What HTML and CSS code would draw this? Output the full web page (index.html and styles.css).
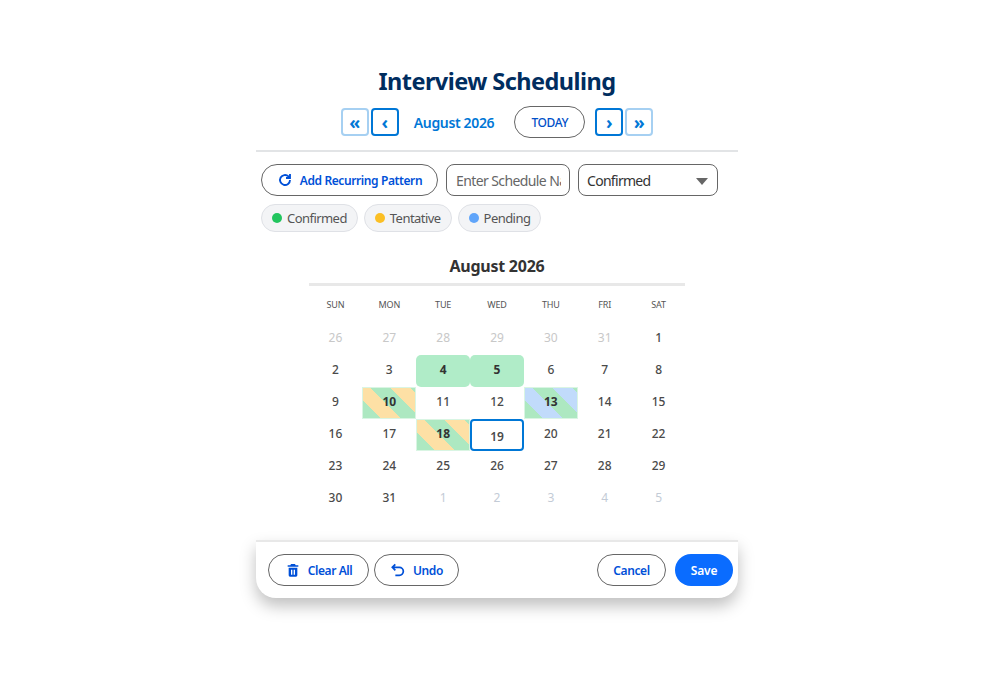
FILE: index.html
```html
<!DOCTYPE html>
<html lang="en">
<head>
<meta charset="utf-8">
<title>Interview Scheduling</title>
<link rel="stylesheet" href="styles.css">
</head>
<body>
<main class="panel">
  <h1 class="title">Interview Scheduling</h1>
  <nav class="nav">
    <button class="sq faint">&laquo;</button>
    <button class="sq">&lsaquo;</button>
    <span class="month">August 2026</span>
    <button class="today">TODAY</button>
    <button class="sq">&rsaquo;</button>
    <button class="sq faint">&raquo;</button>
  </nav>
  <div class="controls">
    <button class="pill add">
      <svg class="ico" viewBox="0 0 24 24" width="16" height="16"><path d="M19.5 12a7.5 7.5 0 1 1-2.3-5.4L19.5 9M19.5 3V9H13.5" fill="none" stroke="currentColor" stroke-width="2.8"/></svg>
      Add Recurring Pattern
    </button>
    <input class="name" placeholder="Enter Schedule Name">
    <div class="select">Confirmed<span class="caret"></span></div>
  </div>
  <div class="legend">
    <span class="chip"><i class="dot green"></i>Confirmed</span>
    <span class="chip"><i class="dot amber"></i>Tentative</span>
    <span class="chip"><i class="dot blue"></i>Pending</span>
  </div>
  <section class="cal">
    <h2 class="cal-title">August 2026</h2>
    <div class="grid">
      <div class="dow">SUN</div><div class="dow">MON</div><div class="dow">TUE</div><div class="dow">WED</div><div class="dow">THU</div><div class="dow">FRI</div><div class="dow">SAT</div>
      <div class="d off">26</div><div class="d off">27</div><div class="d off">28</div><div class="d off">29</div><div class="d off">30</div><div class="d off">31</div><div class="d">1</div>
      <div class="d">2</div><div class="d">3</div><div class="d b solid">4</div><div class="d b solid">5</div><div class="d">6</div><div class="d">7</div><div class="d">8</div>
      <div class="d">9</div><div class="d b st-a">10</div><div class="d">11</div><div class="d">12</div><div class="d b st-b">13</div><div class="d">14</div><div class="d">15</div>
      <div class="d">16</div><div class="d">17</div><div class="d b st-a">18</div><div class="d cur">19</div><div class="d">20</div><div class="d">21</div><div class="d">22</div>
      <div class="d">23</div><div class="d">24</div><div class="d">25</div><div class="d">26</div><div class="d">27</div><div class="d">28</div><div class="d">29</div>
      <div class="d">30</div><div class="d">31</div><div class="d off2">1</div><div class="d off2">2</div><div class="d off2">3</div><div class="d off2">4</div><div class="d off2">5</div>
    </div>
  </section>
  <footer class="foot">
    <button class="pill act">
      <svg class="ico" viewBox="0 0 24 24" width="16" height="16"><path d="M9 3h6l1 2h4v2H4V5h4zM5.5 8.5h13V20a2 2 0 0 1-2 2h-9a2 2 0 0 1-2-2zM9 11.5V19h2v-7.5zm4 0V19h2v-7.5z" fill="currentColor" fill-rule="evenodd"/></svg>
      Clear All
    </button>
    <button class="pill act">
      <svg class="ico" viewBox="0 0 24 24" width="16" height="16"><path d="M8 3.5 3.5 8 8 12.5M4 8h10a6 6 0 0 1 0 12H8" fill="none" stroke="currentColor" stroke-width="2.6"/></svg>
      Undo
    </button>
    <span class="spacer"></span>
    <button class="pill act cancel">Cancel</button>
    <button class="save">Save</button>
  </footer>
</main>
</body>
</html>
```
FILE: styles.css
```css
* { box-sizing: border-box; }
body { margin: 0; padding: 0 0 40px 1px; background: #fff; font-family: "Noto Sans", sans-serif; color: #333; }
button { font-family: inherit; cursor: pointer; background: #fff; }
.panel { width: 482px; margin: 0 auto; padding-top: 64px; }
.title { margin: 0; text-align: center; font-size: 23.5px; letter-spacing: -0.55px; line-height: 34px; font-weight: 700; color: #002d5f; }
.nav { display: flex; justify-content: center; align-items: center; padding: 8px 0 12px; border-bottom: 2px solid #e2e4e6; }
.sq { width: 28px; height: 28px; margin: 0 1px; padding: 0; border: 2px solid #0077d6; border-radius: 4px; color: #0077d6; font-size: 18px; line-height: 20px; font-weight: 700; }
.sq.faint { border-color: #a6d0f2; }
.month { margin: 0 20px 0 14px; font-size: 14px; letter-spacing: -0.35px; font-weight: 600; color: #0077d6; }
.today { width: 71px; height: 32px; margin-right: 9px; border: 1px solid #666; border-radius: 16px; color: #0050c8; font-size: 12px; letter-spacing: -0.4px; font-weight: 500; padding: 0; }
.controls { display: flex; align-items: center; gap: 8px; padding: 12px 5px 0; }
.pill { display: inline-flex; align-items: center; justify-content: center; gap: 7px; border: 1px solid #666; border-radius: 16px; height: 32px; color: #0050d8; font-size: 12px; letter-spacing: -0.4px; font-weight: 600; padding: 0; }
.add { width: 177px; }
.name { width: 124px; height: 32px; border: 1px solid #666; border-radius: 8px; padding: 0 8px 0 9px; font: 14px "Noto Sans", sans-serif; letter-spacing: -0.6px; color: #333; outline: 0; }
.name::placeholder { color: #666; opacity: 1; }
.select { position: relative; width: 140px; height: 32px; border: 1px solid #666; border-radius: 8px; padding-left: 8px; font-size: 14px; letter-spacing: -0.7px; line-height: 32px; color: #333; }
.caret { position: absolute; right: 9px; top: 13px; border-left: 6px solid transparent; border-right: 6px solid transparent; border-top: 7px solid #666; }
.legend { display: flex; gap: 6px; padding: 8px 5px 0; }
.chip { display: inline-flex; align-items: center; gap: 5px; height: 28px; padding: 0 10px; border: 1px solid #dfe1e6; border-radius: 14px; background: #f3f4f6; color: #555; font-size: 13px; letter-spacing: -0.55px; }
.dot { width: 10px; height: 10px; border-radius: 50%; }
.green { background: #22c55e; }
.amber { background: #fbbf24; }
.blue { background: #60a5fa; }
.cal { width: 376px; margin: 21px auto 0; }
.cal-title { margin: 0; border-bottom: 3px solid #e8e8e8; text-align: center; font-size: 16px; letter-spacing: -0.25px; line-height: 20px; font-weight: 700; color: #333; height: 33px; padding-top: 3px; }
.grid { display: grid; grid-template-columns: repeat(7, 1fr); grid-template-rows: 37px repeat(6, 32px); margin: 0 -0.5px; }
.dow { display: flex; align-items: center; justify-content: center; font-size: 9px; letter-spacing: -0.1px; color: #555; }
.d { display: flex; align-items: center; justify-content: center; padding-bottom: 3px; font-size: 12px; font-weight: 500; color: #4a4a4a; }
.off { color: #c8c8c8; font-weight: 400; }
.off2 { color: #c3cbd6; font-weight: 400; }
.b { font-weight: 700; color: #333; }
.solid { background: #b0ecc8; border-radius: 5px; }
.st-a { background: repeating-linear-gradient(45deg, #ade8c1 0 14.14px, #fde0a5 14.14px 28.28px); box-shadow: inset 0 0 0 1px #d9f5e3; }
.st-b { background: repeating-linear-gradient(45deg, #ade8c1 0 14.14px, #c1dbfb 14.14px 28.28px); box-shadow: inset 0 0 0 1px #d9f5e3; }
.cur { border: 2px solid #0077d6; border-radius: 4px; padding: 2px 0 0; font-weight: 600; }
.foot { display: flex; align-items: center; gap: 5px; height: 58px; margin-top: 25px; padding: 0 5px 0 12px; background: #fff; border-top: 2px solid #e8e8e8; border-radius: 0 0 20px 20px; box-shadow: 0 8px 16px rgba(0,0,0,.25); }
.act { height: 32px; }
.act:nth-child(1) { width: 101px; }
.act:nth-child(2) { width: 85px; }
.spacer { flex: 1; }
.cancel { width: 69px; margin-right: 4px; }
.save { width: 58px; height: 32px; border: 0; border-radius: 16px; background: #0a6cff; color: #fff; font-size: 12px; letter-spacing: -0.2px; font-weight: 600; padding: 0; }
```
